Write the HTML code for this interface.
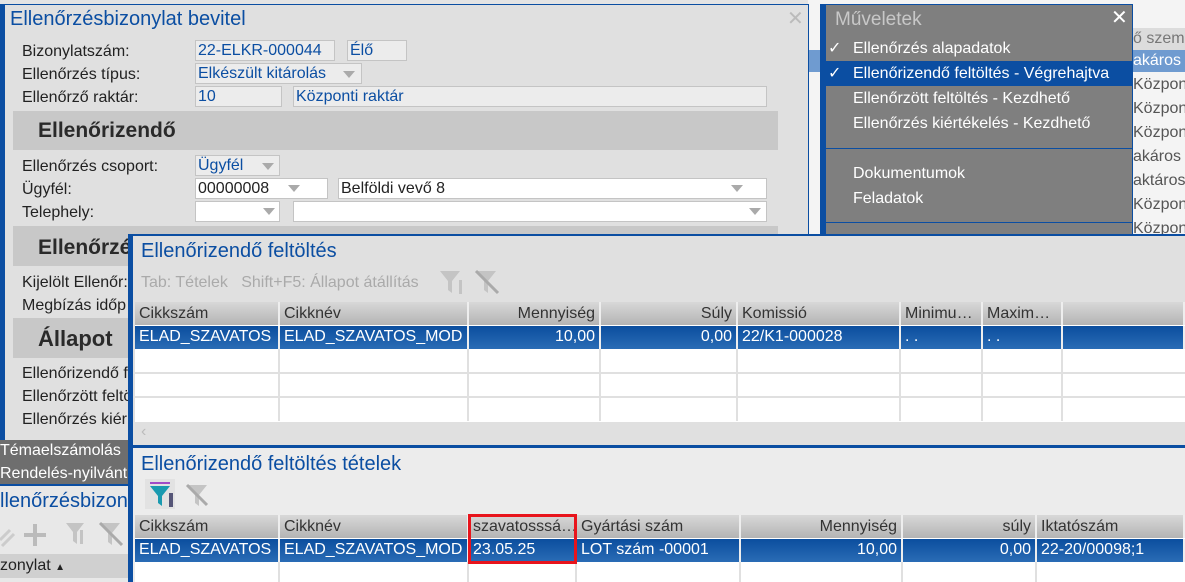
<!DOCTYPE html>
<html><head><meta charset="utf-8"><style>
*{box-sizing:border-box;margin:0;padding:0}
body{width:1185px;height:582px;overflow:hidden;background:#e4e4e4;font-family:"Liberation Sans",Arial,sans-serif;font-size:16px;color:#222;position:relative}
.a{position:absolute;white-space:nowrap}
.blue{color:#0b4ea2}
.fld{position:absolute;background:#ececec;border:1px solid #c4c4c4;color:#0b4ea2;padding-left:2px;height:21px;line-height:19px;font-size:16px;white-space:nowrap;overflow:hidden}
.sec{position:absolute;background:#c8c8c8;font-weight:bold;font-size:21px;color:#2a2a2a;padding-left:25px}
.tri{position:absolute;width:0;height:0;border-left:6px solid transparent;border-right:6px solid transparent;border-top:7px solid #aaa}
.hdr{position:absolute;height:23px;background:linear-gradient(#d8d8d8,#b4b4b4);font-size:16px;line-height:23px;color:#333;border-right:2px solid #eee;padding:0 4px;overflow:hidden;white-space:nowrap}
.sel{position:absolute;height:23px;background:linear-gradient(#0b4e9e,#2a6cb5);color:#fff;font-size:16px;line-height:22px;border-right:2px solid #eee;padding:0 4px;overflow:hidden;white-space:nowrap}
.r{text-align:right}
.vl{position:absolute;width:2px;background:#e0e0e0}
.hl{position:absolute;height:2px;background:#e0e0e0}
</style></head><body>
<div class="a" style="left:808px;top:0;width:377px;height:234px;background:#f4f4f4"></div>
<div class="a" style="left:1133px;top:28px;width:52px;height:22px;background:#dcdcdc;color:#777;line-height:22px">ő szeme</div>
<div class="a" style="left:808px;top:50px;width:377px;height:22px;background:#6f9bd0"></div>
<div class="a" style="left:1133px;top:50px;color:#fff;line-height:22px">akáros</div>
<div class="a" style="left:1133px;top:73px;line-height:24px;color:#555">Közpon<br>Közpon<br>Közpon<br>akáros<br>aktáros<br>Közpon<br>Közpon</div>

<div class="a" style="left:0;top:4px;width:809px;height:440px;background:#e0e0e0;border:1px solid #0b4ea2;border-left:5px solid #0b4ea2"></div>
<div class="a blue" style="left:10px;top:8px;font-size:20px">Ellenőrzésbizonylat bevitel</div>
<div class="a" style="left:787px;top:6px;font-size:20px;color:#bbb">✕</div>
<div class="a" style="left:22px;top:40px;line-height:23px">Bizonylatszám:<br>Ellenőrzés típus:<br>Ellenőrző raktár:</div>
<div class="fld" style="left:195px;top:40px;width:140px">22-ELKR-000044</div>
<div class="fld" style="left:347px;top:40px;width:60px">Élő</div>
<div class="fld" style="left:195px;top:63px;width:167px">Elkészült kitárolás</div><div class="tri" style="left:343px;top:71px"></div>
<div class="fld" style="left:195px;top:86px;width:87px">10</div>
<div class="fld" style="left:293px;top:86px;width:474px">Központi raktár</div>
<div class="sec" style="left:13px;top:111px;width:765px;height:39px;line-height:39px">Ellenőrizendő</div>
<div class="a" style="left:22px;top:155px;line-height:23px">Ellenőrzés csoport:<br>Ügyfél:<br>Telephely:</div>
<div class="fld" style="left:195px;top:155px;width:85px">Ügyfél</div><div class="tri" style="left:262px;top:163px"></div>
<div class="fld" style="left:195px;top:178px;width:133px;background:#fff;color:#222">00000008</div><div class="tri" style="left:288px;top:185px"></div>
<div class="fld" style="left:338px;top:178px;width:429px;background:#fff;color:#222">Belföldi vevő 8</div><div class="tri" style="left:731px;top:185px"></div>
<div class="fld" style="left:195px;top:201px;width:85px;background:#fff"></div><div class="tri" style="left:263px;top:208px"></div>
<div class="fld" style="left:293px;top:201px;width:474px;background:#fff"></div><div class="tri" style="left:749px;top:208px"></div>
<div class="sec" style="left:13px;top:226px;width:765px;height:40px;line-height:44px">Ellenőrzé</div>
<div class="a" style="left:22px;top:271px;line-height:23px">Kijelölt Ellenőr:<br>Megbízás időp</div>
<div class="sec" style="left:13px;top:318px;width:765px;height:40px;line-height:42px;font-size:22px">Állapot</div>
<div class="a" style="left:22px;top:362px;line-height:23px">Ellenőrizendő f<br>Ellenőrzött feltö<br>Ellenőrzés kiér</div>

<div class="a" style="left:0;top:440px;width:130px;height:22px;background:#6e6e6e;color:#fff;line-height:22px">Témaelszámolás</div>
<div class="a" style="left:0;top:462px;width:130px;height:24px;background:#6e6e6e;color:#fff;line-height:24px;border-bottom:2px solid #0b4ea2">Rendelés-nyilvánt</div>
<div class="a" style="left:0;top:486px;width:130px;height:96px;background:#e8e8e8"></div>
<div class="a blue" style="left:0;top:490px;font-size:20px">llenőrzésbizony</div>
<svg class="a" style="left:0;top:518px" width="130" height="34"><path d="M0 22l10-10M2 28l12-12" stroke="#ccc" stroke-width="3"/><path d="M35 6v22M24 17h22" stroke="#bbb" stroke-width="4"/><path d="M66 5h18l-7 9v12l-4-3v-9z" fill="#c4c4c4"/><rect x="80" y="12" width="3" height="14" fill="#c4c4c4"/><path d="M100 5h20l-8 10v12l-4-3v-9z" fill="#c4c4c4"/><path d="M100 5l22 22" stroke="#aaa" stroke-width="3"/></svg>
<div class="a" style="left:0;top:554px;width:130px;height:24px;background:#d0d0d0;line-height:24px">zonylat <span style="font-size:10px">▲</span></div>

<div class="a" style="left:820px;top:4px;width:313px;height:231px;background:#7f7f7f;border:1px solid #0b4ea2;border-left:6px solid #0b4ea2"></div>
<div class="a" style="left:835px;top:9px;font-size:19px;color:#c8c8c8">Műveletek</div>
<div class="a" style="left:1111px;top:5px;font-size:20px;color:#fff">✕</div>
<div class="a" style="left:826px;top:61px;width:306px;height:25px;background:#0b4ea2"></div>
<div class="a" style="left:828px;top:36px;color:#fff;line-height:25px">✓</div>
<div class="a" style="left:828px;top:61px;color:#fff;line-height:25px">✓</div>
<div class="a" style="left:853px;top:36px;color:#fff;line-height:25px">Ellenőrzés alapadatok<br>Ellenőrizendő feltöltés - Végrehajtva<br>Ellenőrzött feltöltés - Kezdhető<br>Ellenőrzés kiértékelés - Kezdhető</div>
<div class="a" style="left:826px;top:148px;width:306px;height:1px;background:#0b4ea2"></div>
<div class="a" style="left:853px;top:161px;color:#fff;line-height:25px">Dokumentumok<br>Feladatok</div>
<div class="a" style="left:826px;top:222px;width:306px;height:1px;background:#0b4ea2"></div>

<div class="a" style="left:128px;top:234px;width:1057px;height:348px;background:#e0e0e0;border-top:2px solid #0b4ea2;border-left:5px solid #0b4ea2"></div>
<div class="a blue" style="left:141px;top:240px;font-size:20px">Ellenőrizendő feltöltés</div>
<div class="a" style="left:141px;top:274px;color:#aaa">Tab: Tételek &nbsp;&nbsp;Shift+F5: Állapot átállítás</div>
<svg class="a" style="left:438px;top:268px" width="66" height="28"><path d="M2 3h20l-8 10v12l-4-3v-9z" fill="#c4c4c4"/><rect x="21" y="12" width="3" height="14" fill="#c4c4c4"/><path d="M38 3h20l-8 10v12l-4-3v-9z" fill="#c4c4c4"/><path d="M38 3l22 22" stroke="#aaa" stroke-width="3"/></svg>
<div class="a" style="left:135px;top:302px;width:1050px;height:120px;background:#fff"></div>
<div class="hdr" style="left:135px;top:302px;width:145px">Cikkszám</div>
<div class="hdr" style="left:280px;top:302px;width:189px">Cikknév</div>
<div class="hdr r" style="left:469px;top:302px;width:132px">Mennyiség</div>
<div class="hdr r" style="left:601px;top:302px;width:137px">Súly</div>
<div class="hdr" style="left:738px;top:302px;width:163px">Komissió</div>
<div class="hdr" style="left:901px;top:302px;width:82px">Minimu…</div>
<div class="hdr" style="left:983px;top:302px;width:80px">Maxim…</div>
<div class="hdr" style="left:1063px;top:302px;width:122px"></div>
<div class="sel" style="left:135px;top:326px;width:145px">ELAD_SZAVATOS</div>
<div class="sel" style="left:280px;top:326px;width:189px">ELAD_SZAVATOS_MOD</div>
<div class="sel r" style="left:469px;top:326px;width:132px">10,00</div>
<div class="sel r" style="left:601px;top:326px;width:137px">0,00</div>
<div class="sel" style="left:738px;top:326px;width:163px">22/K1-000028</div>
<div class="sel" style="left:901px;top:326px;width:82px">. .</div>
<div class="sel" style="left:983px;top:326px;width:80px">. .</div>
<div class="sel" style="left:1063px;top:326px;width:122px"></div>
<div class="hl" style="left:135px;top:372px;width:1050px"></div>
<div class="hl" style="left:135px;top:396px;width:1050px"></div>
<div class="vl" style="left:278px;top:349px;height:72px"></div>
<div class="vl" style="left:467px;top:349px;height:72px"></div>
<div class="vl" style="left:599px;top:349px;height:72px"></div>
<div class="vl" style="left:736px;top:349px;height:72px"></div>
<div class="vl" style="left:899px;top:349px;height:72px"></div>
<div class="vl" style="left:981px;top:349px;height:72px"></div>
<div class="vl" style="left:1061px;top:349px;height:72px"></div>
<div class="a" style="left:141px;top:423px;color:#bbb;font-size:16px">‹</div>
<div class="a" style="left:133px;top:445px;width:1052px;height:3px;background:#0b4ea2"></div>
<div class="a" style="left:133px;top:448px;width:1052px;height:134px;background:#ececec"></div>
<div class="a blue" style="left:141px;top:453px;font-size:20px">Ellenőrizendő feltöltés tételek</div>
<div class="a" style="left:145px;top:479px;width:30px;height:30px;background:#e2e2e2"></div>
<svg class="a" style="left:147px;top:481px" width="62" height="28"><path d="M3 2h20" stroke="#a04cc8" stroke-width="2"/><path d="M3 5h20l-8 10v10l-4-3v-7z" fill="#1a9ab0"/><rect x="22" y="12" width="4" height="14" fill="#557"/><path d="M40 4h20l-8 10v11l-4-3v-8z" fill="#c4c4c4"/><path d="M40 4l20 20" stroke="#aaa" stroke-width="3"/></svg>
<div class="a" style="left:135px;top:515px;width:1050px;height:67px;background:#fff"></div>
<div class="hdr" style="left:135px;top:515px;width:145px">Cikkszám</div>
<div class="hdr" style="left:280px;top:515px;width:189px">Cikknév</div>
<div class="hdr" style="left:469px;top:515px;width:108px">szavatosssá…</div>
<div class="hdr" style="left:577px;top:515px;width:164px">Gyártási szám</div>
<div class="hdr r" style="left:741px;top:515px;width:162px">Mennyiség</div>
<div class="hdr r" style="left:903px;top:515px;width:134px">súly</div>
<div class="hdr" style="left:1037px;top:515px;width:148px">Iktatószám</div>
<div class="sel" style="left:135px;top:539px;width:145px">ELAD_SZAVATOS</div>
<div class="sel" style="left:280px;top:539px;width:189px">ELAD_SZAVATOS_MOD</div>
<div class="sel" style="left:469px;top:539px;width:108px">23.05.25</div>
<div class="sel" style="left:577px;top:539px;width:164px">LOT szám -00001</div>
<div class="sel r" style="left:741px;top:539px;width:162px">10,00</div>
<div class="sel r" style="left:903px;top:539px;width:134px">0,00</div>
<div class="sel" style="left:1037px;top:539px;width:148px">22-20/00098;1</div>
<div class="vl" style="left:278px;top:562px;height:20px"></div>
<div class="vl" style="left:467px;top:562px;height:20px"></div>
<div class="vl" style="left:575px;top:562px;height:20px"></div>
<div class="vl" style="left:739px;top:562px;height:20px"></div>
<div class="vl" style="left:901px;top:562px;height:20px"></div>
<div class="vl" style="left:1035px;top:562px;height:20px"></div>
<div class="a" style="left:468px;top:514px;width:109px;height:50px;border:3px solid #e8141c"></div>
</body></html>
